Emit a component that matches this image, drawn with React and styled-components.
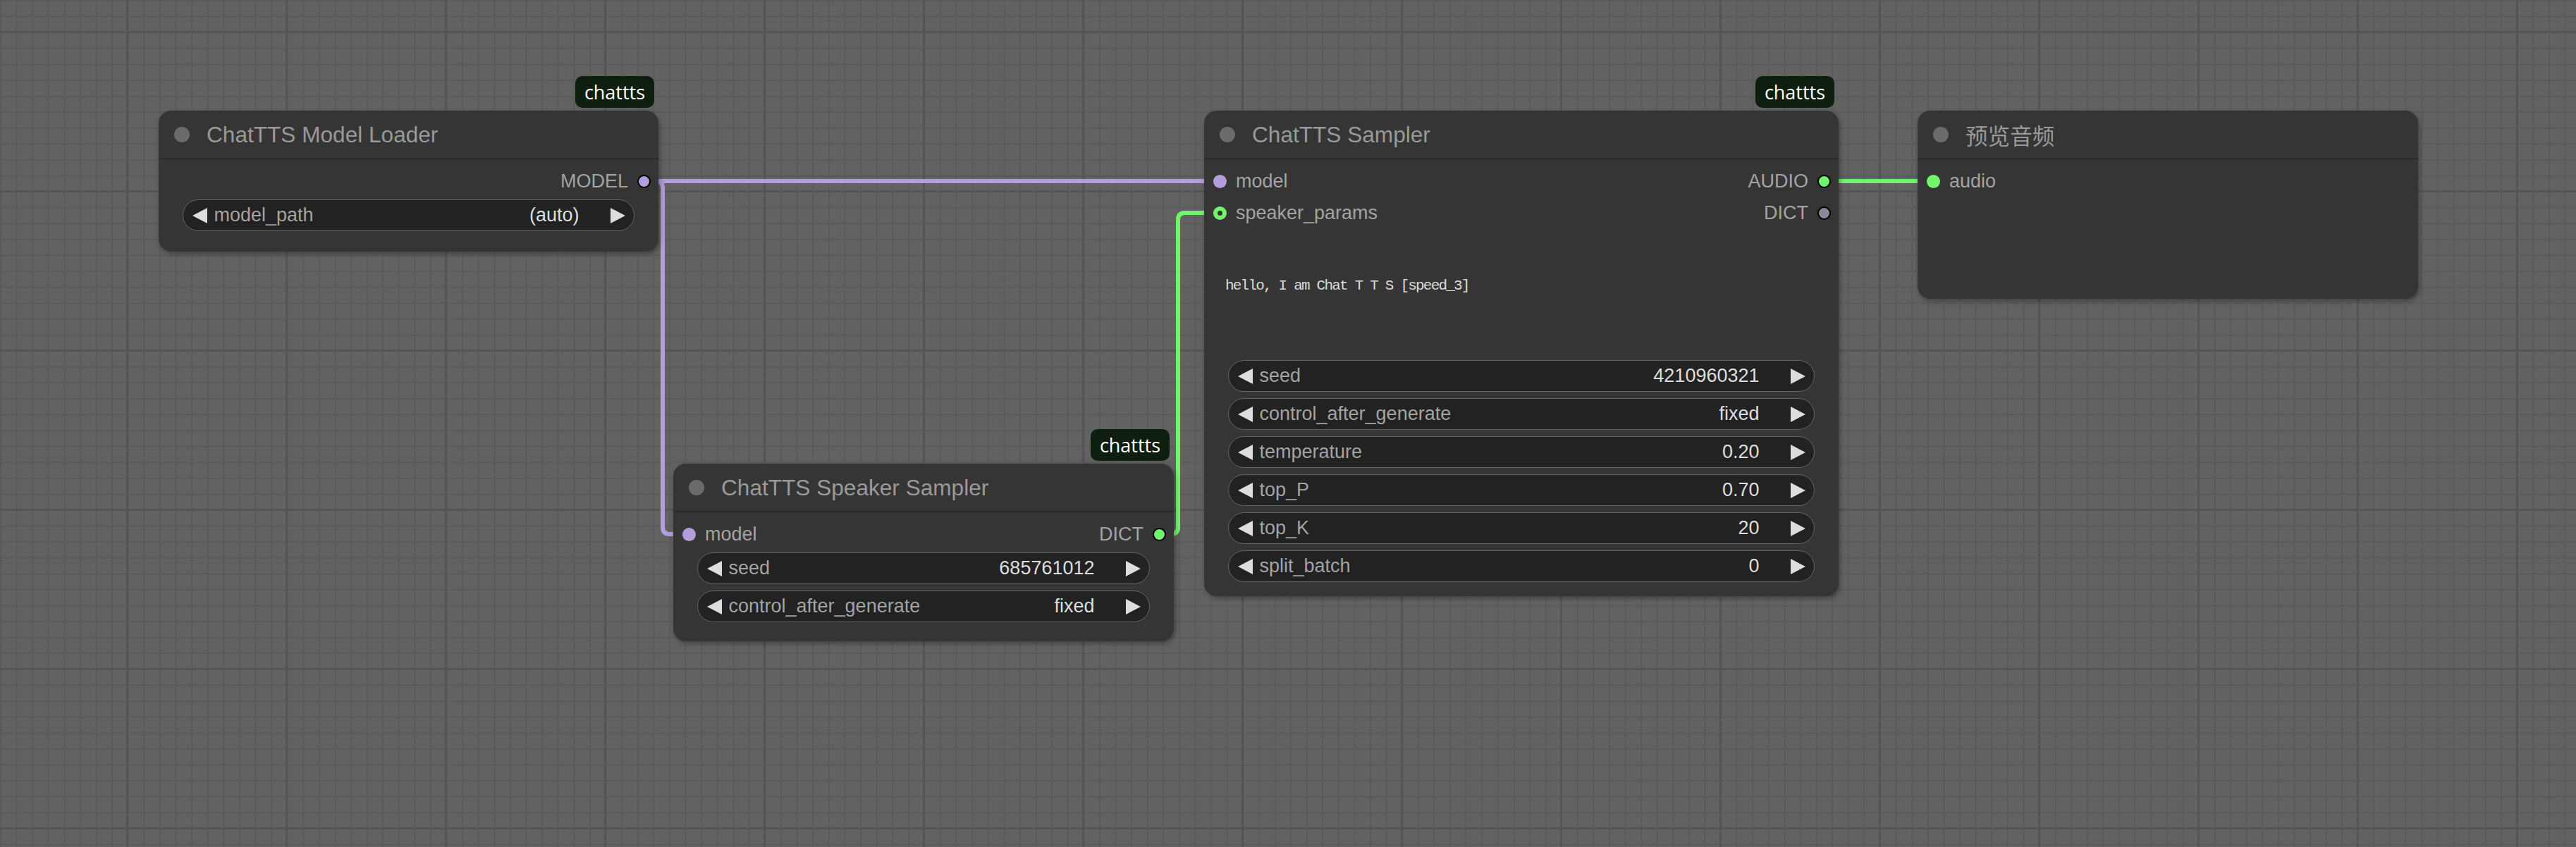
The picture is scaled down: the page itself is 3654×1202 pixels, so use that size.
import styled, { createGlobalStyle } from 'styled-components';

const GlobalStyle = createGlobalStyle`
  html, body {
    margin: 0;
    padding: 0;
    overflow: hidden;
    background: #626262;
  }
`;

const PURPLE = '#b39ddb';
const GREEN = '#72f36c';
const GREY_SLOT = '#8a8a9c';

const Canvas = styled.div`
  position: relative;
  width: 3654px;
  height: 1202px;
  overflow: hidden;
  font-family: 'Liberation Sans', 'Noto Sans CJK SC', sans-serif;
  background-color: #626262;
  background-image:
    linear-gradient(to right, #545454 3px, transparent 3px),
    linear-gradient(to bottom, #545454 3px, transparent 3px),
    linear-gradient(to right, #5a5a5a 2px, transparent 2px),
    linear-gradient(to bottom, #5a5a5a 2px, transparent 2px);
  background-size: 226px 226px, 226px 226px, 22.6px 22.6px, 22.6px 22.6px;
  background-position: 179px 0, 0 44px, 0 0, 0 0;
`;

const Links = styled.svg`
  position: absolute;
  inset: 0;
  width: 100%;
  height: 100%;
  z-index: 0;
`;

const Node = styled.div`
  position: absolute;
  z-index: 1;
  left: ${(p) => p.$x}px;
  top: ${(p) => p.$y}px;
  width: ${(p) => p.$w}px;
  height: ${(p) => p.$h}px;
  box-sizing: border-box;
  background: #353535;
  border-radius: 18px;
  box-shadow: 2px 3px 7px rgba(0, 0, 0, 0.35);
  display: flex;
  flex-direction: column;
`;

const Badge = styled.div`
  position: absolute;
  right: 6px;
  bottom: calc(100% + 4px);
  width: 112px;
  height: 45px;
  border-radius: 10px;
  background: #0f1f0f;
  color: #ffffff;
  font-family: 'Open Sans', 'Noto Sans', sans-serif;
  font-size: 27px;
  display: flex;
  align-items: center;
  justify-content: center;
`;

const TitleBar = styled.div`
  height: 69px;
  box-sizing: border-box;
  border-bottom: 2px solid #2a2a2a;
  display: flex;
  align-items: center;
  padding-left: 22px;
  padding-top: 1px;
`;

const TitleDot = styled.span`
  width: 22px;
  height: 22px;
  border-radius: 50%;
  background: #6b6b6b;
  flex-shrink: 0;
`;

const TitleText = styled.span`
  margin-left: 24px;
  font-size: 31.6px;
  color: #999999;
  white-space: nowrap;
`;

const Body = styled.div`
  display: flex;
  flex-direction: column;
  padding-top: 9px;
`;

const SlotRow = styled.div`
  height: 45.2px;
  display: flex;
  align-items: center;
  justify-content: space-between;
  padding: 0 11px 0 13px;
`;

const Slot = styled.div`
  display: flex;
  align-items: center;
  gap: 13px;
  margin-left: ${(p) => (p.$out ? 'auto' : '0')};
`;

const SlotLabel = styled.span`
  font-size: 27px;
  color: #a3a3a3;
  white-space: nowrap;
`;

const Dot = styled.span`
  width: 19px;
  height: 19px;
  box-sizing: border-box;
  border-radius: 50%;
  background: ${(p) => (p.$ring ? '#353535' : p.$color)};
  border: ${(p) =>
    p.$ring ? `6px solid ${p.$color}` : p.$outlined ? '2px solid #000' : 'none'};
  flex-shrink: 0;
`;

const WidgetList = styled.div`
  display: flex;
  flex-direction: column;
  gap: 9px;
  margin-top: ${(p) => p.$top}px;
`;

const WidgetBox = styled.div`
  height: 45px;
  margin: 0 34px;
  box-sizing: border-box;
  border: 1.5px solid #666666;
  border-radius: 23px;
  background: #222222;
  display: flex;
  align-items: center;
  padding: 0 12.5px;
  font-size: 27px;
`;

const Arrow = styled.span`
  width: 0;
  height: 0;
  border-top: 11px solid transparent;
  border-bottom: 11px solid transparent;
  ${(p) =>
    p.$right ? 'border-left: 21px solid #dddddd;' : 'border-right: 21px solid #dddddd;'}
  flex-shrink: 0;
`;

const WidgetLabel = styled.span`
  margin-left: 10px;
  color: #a3a3a3;
  white-space: nowrap;
`;

const WidgetValue = styled.span`
  margin-left: auto;
  margin-right: 44px;
  color: #dddddd;
  white-space: nowrap;
`;

const TextArea = styled.div`
  margin-top: 3px;
  height: 174px;
  box-sizing: border-box;
  padding: 66px 0 0 30px;
  font-family: 'Liberation Mono', monospace;
  font-size: 21px;
  letter-spacing: -1.8px;
  line-height: 24px;
  color: #dcdcdc;
  white-space: pre;
`;

function Widget({ label, value }) {
  return (
    <WidgetBox>
      <Arrow />
      <WidgetLabel>{label}</WidgetLabel>
      <WidgetValue>{value}</WidgetValue>
      <Arrow $right />
    </WidgetBox>
  );
}

function Title({ children }) {
  return (
    <TitleBar>
      <TitleDot />
      <TitleText>{children}</TitleText>
    </TitleBar>
  );
}

function App() {
  return (
    <>
      <GlobalStyle />
      <Canvas>
        <Links viewBox="0 0 3654 1202">
          <g fill="none" strokeWidth="6">
            <path d="M913 257 H1730" stroke={PURPLE} />
            <path d="M913 257 H930 Q940 257 940 267 V748 Q940 758 950 758 H978" stroke={PURPLE} />
            <path d="M1644 758 H1661 Q1671 758 1671 748 V312 Q1671 302 1681 302 H1730" stroke={GREEN} />
            <path d="M2587 257 H2743" stroke={GREEN} />
          </g>
        </Links>

        <Node $x={225} $y={157} $w={709} $h={200}>
          <Badge>chattts</Badge>
          <Title>ChatTTS Model Loader</Title>
          <Body>
            <SlotRow>
              <Slot $out>
                <SlotLabel>MODEL</SlotLabel>
                <Dot $color={PURPLE} $outlined />
              </Slot>
            </SlotRow>
            <WidgetList $top={3}>
              <Widget label="model_path" value="(auto)" />
            </WidgetList>
          </Body>
        </Node>

        <Node $x={955} $y={658} $w={710} $h={252}>
          <Badge>chattts</Badge>
          <Title>ChatTTS Speaker Sampler</Title>
          <Body>
            <SlotRow>
              <Slot>
                <Dot $color={PURPLE} />
                <SlotLabel>model</SlotLabel>
              </Slot>
              <Slot $out>
                <SlotLabel>DICT</SlotLabel>
                <Dot $color={GREEN} $outlined />
              </Slot>
            </SlotRow>
            <WidgetList $top={3}>
              <Widget label="seed" value="685761012" />
              <Widget label="control_after_generate" value="fixed" />
            </WidgetList>
          </Body>
        </Node>

        <Node $x={1708} $y={157} $w={900} $h={689}>
          <Badge>chattts</Badge>
          <Title>ChatTTS Sampler</Title>
          <Body>
            <SlotRow>
              <Slot>
                <Dot $color={PURPLE} />
                <SlotLabel>model</SlotLabel>
              </Slot>
              <Slot $out>
                <SlotLabel>AUDIO</SlotLabel>
                <Dot $color={GREEN} $outlined />
              </Slot>
            </SlotRow>
            <SlotRow>
              <Slot>
                <Dot $color={GREEN} $ring />
                <SlotLabel>speaker_params</SlotLabel>
              </Slot>
              <Slot $out>
                <SlotLabel>DICT</SlotLabel>
                <Dot $color={GREY_SLOT} $outlined />
              </Slot>
            </SlotRow>
            <TextArea>hello, I am Chat T T S [speed_3]</TextArea>
            <WidgetList $top={9}>
              <Widget label="seed" value="4210960321" />
              <Widget label="control_after_generate" value="fixed" />
              <Widget label="temperature" value="0.20" />
              <Widget label="top_P" value="0.70" />
              <Widget label="top_K" value="20" />
              <Widget label="split_batch" value="0" />
            </WidgetList>
          </Body>
        </Node>

        <Node $x={2720} $y={157} $w={710} $h={267}>
          <Title>预览音频</Title>
          <Body>
            <SlotRow>
              <Slot>
                <Dot $color={GREEN} />
                <SlotLabel>audio</SlotLabel>
              </Slot>
            </SlotRow>
          </Body>
        </Node>
      </Canvas>
    </>
  );
}

export default App;
